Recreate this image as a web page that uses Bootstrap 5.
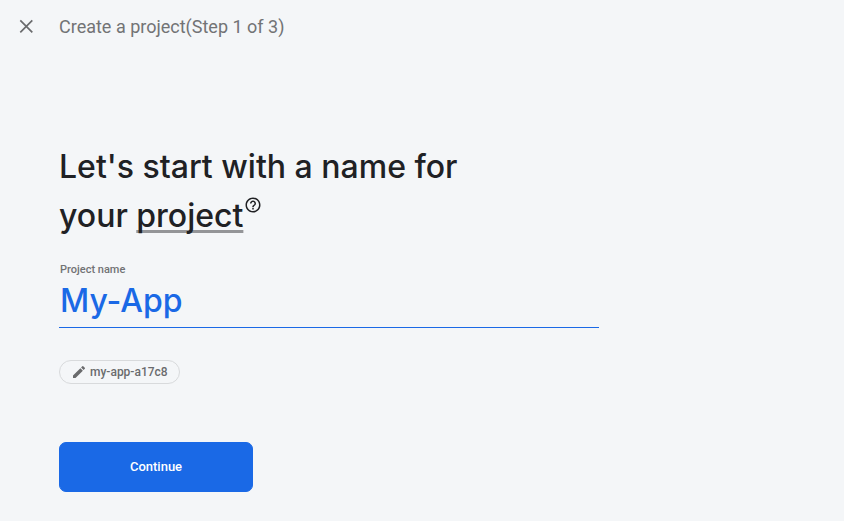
<!DOCTYPE html>
<html lang="en">
<head>
<meta charset="utf-8">
<meta name="viewport" content="width=device-width, initial-scale=1">
<title>Create a project</title>
<link href="https://cdn.jsdelivr.net/npm/bootstrap@5.3.0/dist/css/bootstrap.min.css" rel="stylesheet">
<style>
  body { background: #f4f6f8; color: #202124; font-family: Roboto, "Liberation Sans", sans-serif; }
  svg { display: block; }
  .topbar { height: 54px; padding-left: 17px; color: #727375; }
  .close-btn { width: 18px; height: 18px; color: #6a6b6d; }
  .step-title { font-size: 18px; line-height: 24px; margin-left: 24px; }
  .wizard { max-width: 658px; padding: 88px 59px 0; }
  .headline { font-family: Inter, "Liberation Sans", sans-serif; font-size: 32px; line-height: 49px; font-weight: 500; max-width: 440px; color: #202124; }
  .term { text-decoration: underline; text-decoration-color: #949598; text-decoration-thickness: 3px; text-underline-offset: 3px; text-decoration-skip-ink: none; }
  .help-btn { width: 18px; height: 18px; margin-left: 1px; color: #202124; vertical-align: 13px; }
  .name-label { font-size: 11px; line-height: 16px; font-weight: 500; color: #717274; padding-left: 1px; margin-top: 22px; }
  .name-input { font-family: Inter, "Liberation Sans", sans-serif; font-size: 32px; height: 50px; padding: 0 1px 4px; font-weight: 500; color: #1a69e6; border-bottom: 1px solid #1a69e6 !important; outline: 0; }
  .id-chip { height: 24px; padding: 0 11px; gap: 3px; font-size: 12px; line-height: 16px; font-weight: 500; color: #6a6b6d; border: 1px solid #d8dadc; border-radius: 12px; margin-top: 32px; }
  .continue-btn { width: 194px; height: 50px; margin-top: 58px; font-size: 13px; font-weight: 500; border-radius: 7px; --bs-btn-bg: #1a69e6; --bs-btn-border-color: #1a69e6; }
</style>
</head>
<body>
<header class="topbar d-flex align-items-center">
  <button type="button" class="close-btn btn border-0 p-0" aria-label="Close">
    <svg width="18" height="18" viewBox="0 0 18 18" fill="none" stroke="currentColor" stroke-width="1.7"><path d="M3.300 2.300 15.300 14.300M15.300 2.300 3.300 14.300"/></svg>
  </button>
  <span class="step-title">Create a project(Step 1 of 3)</span>
</header>
<main class="wizard">
  <h1 class="headline mb-0">Let's start with a name for<br>your <span class="term">project</span><button type="button" class="help-btn btn border-0 p-0" aria-label="About projects"><svg width="18" height="18" viewBox="0 0 24 24" fill="currentColor"><path d="M11 18h2v-2h-2v2zm1-16C6.480 2 2 6.480 2 12s4.480 10 10 10 10-4.480 10-10S17.520 2 12 2zm0 18c-4.410 0-8-3.590-8-8s3.590-8 8-8 8 3.590 8 8-3.590 8-8 8zm0-14c-2.210 0-4 1.790-4 4h2c0-1.100.900-2 2-2s2 .900 2 2c0 2-3 1.750-3 5h2c0-2.250 3-2.500 3-5 0-2.210-1.790-4-4-4z"/></svg></button></h1>
  <form>
    <label class="name-label d-block" for="project-name">Project name</label>
    <input class="name-input d-block w-100 border-0 bg-transparent" id="project-name" type="text" value="My-App" spellcheck="false" autocomplete="off">
    <button type="button" class="id-chip btn d-flex align-items-center">
      <svg width="16" height="16" viewBox="0 0 24 24" fill="currentColor" aria-hidden="true"><path d="M3 17.250V21h3.750L17.810 9.940l-3.750-3.750L3 17.250zM20.710 7.040a1 1 0 0 0 0-1.410l-2.340-2.340a1 1 0 0 0-1.410 0l-1.830 1.830 3.750 3.750 1.830-1.830z"/></svg>
      <span>my-app-a17c8</span>
    </button>
    <button type="submit" class="continue-btn btn btn-primary d-block">Continue</button>
  </form>
</main>
<script src="https://cdn.jsdelivr.net/npm/bootstrap@5.3.0/dist/js/bootstrap.bundle.min.js"></script>
</body>
</html>
